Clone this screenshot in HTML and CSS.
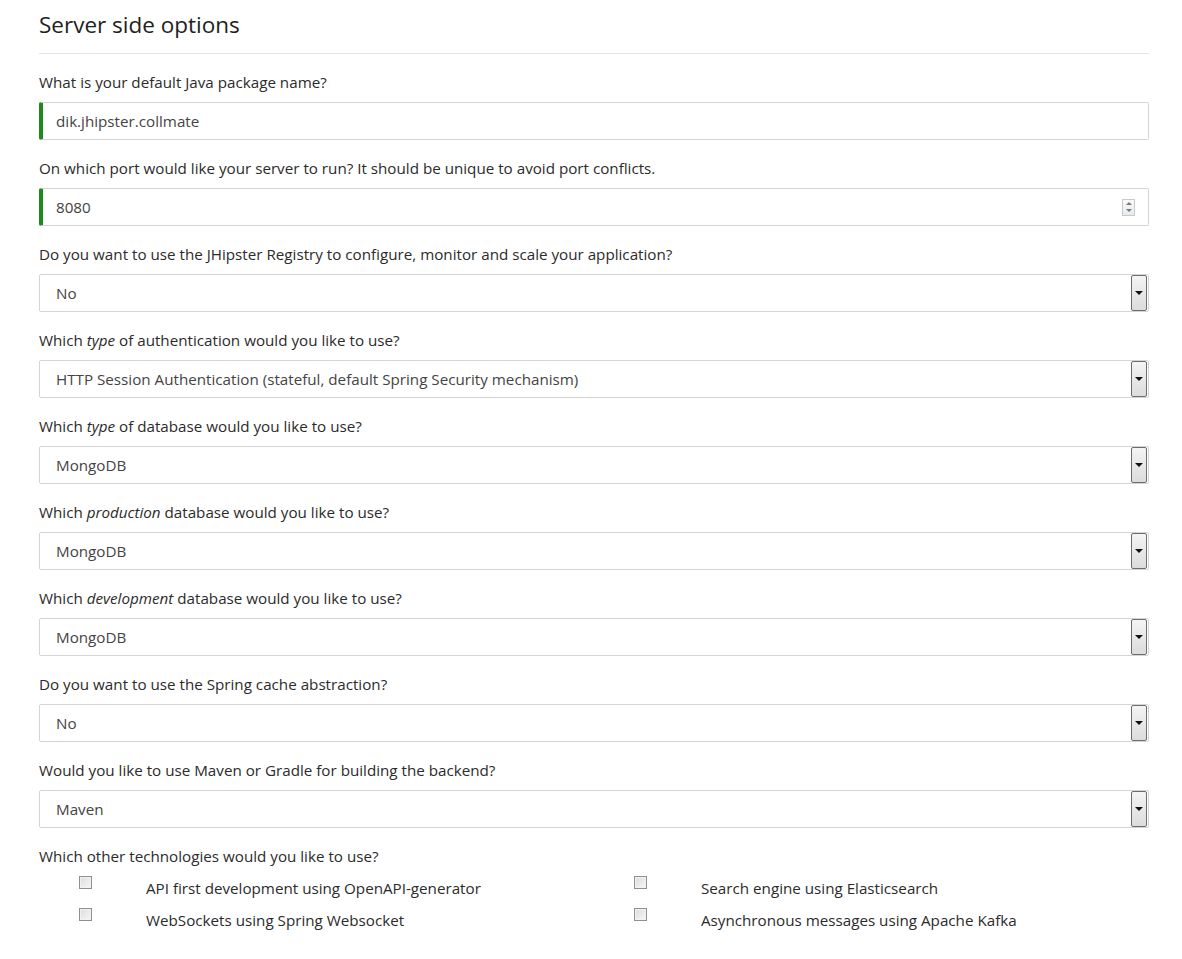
FILE: index.html
```html
<!DOCTYPE html>
<html>
<head>
<meta charset="utf-8">
<link rel="stylesheet" href="styles.css">
</head>
<body>
<div class="page">
  <h2 class="title">Server side options</h2>
  <hr class="rule">

  <div class="field">
    <div class="label">What is your default Java package name?</div>
    <div class="box valid"><span class="value">dik.jhipster.collmate</span></div>
  </div>

  <div class="field">
    <div class="label">On which port would like your server to run? It should be unique to avoid port conflicts.</div>
    <div class="box valid"><span class="value">8080</span>
      <span class="spin"><span class="spin-up"></span><span class="spin-down"></span></span>
    </div>
  </div>

  <div class="field">
    <div class="label">Do you want to use the JHipster Registry to configure, monitor and scale your application?</div>
    <div class="box select"><span class="value">No</span><span class="arrow"></span></div>
  </div>

  <div class="field">
    <div class="label">Which <em>type</em> of authentication would you like to use?</div>
    <div class="box select"><span class="value">HTTP Session Authentication (stateful, default Spring Security mechanism)</span><span class="arrow"></span></div>
  </div>

  <div class="field">
    <div class="label">Which <em>type</em> of database would you like to use?</div>
    <div class="box select"><span class="value">MongoDB</span><span class="arrow"></span></div>
  </div>

  <div class="field">
    <div class="label">Which <em>production</em> database would you like to use?</div>
    <div class="box select"><span class="value">MongoDB</span><span class="arrow"></span></div>
  </div>

  <div class="field">
    <div class="label">Which <em>development</em> database would you like to use?</div>
    <div class="box select"><span class="value">MongoDB</span><span class="arrow"></span></div>
  </div>

  <div class="field">
    <div class="label">Do you want to use the Spring cache abstraction?</div>
    <div class="box select"><span class="value">No</span><span class="arrow"></span></div>
  </div>

  <div class="field">
    <div class="label">Would you like to use Maven or Gradle for building the backend?</div>
    <div class="box select"><span class="value">Maven</span><span class="arrow"></span></div>
  </div>

  <div class="field">
    <div class="label">Which other technologies would you like to use?</div>
    <div class="checks">
      <div class="check"><span class="cb"></span><span class="cb-label">API first development using OpenAPI-generator</span></div>
      <div class="check"><span class="cb"></span><span class="cb-label">Search engine using Elasticsearch</span></div>
      <div class="check"><span class="cb"></span><span class="cb-label">WebSockets using Spring Websocket</span></div>
      <div class="check"><span class="cb"></span><span class="cb-label">Asynchronous messages using Apache Kafka</span></div>
    </div>
  </div>
</div>
</body>
</html>
```
FILE: styles.css
```css
html, body {
  margin: 0;
  padding: 0;
  background: #fff;
}
body {
  font-family: "Open Sans", "Noto Sans", "Liberation Sans", sans-serif;
  color: #333;
  font-size: 15.2px;
}
.page {
  width: 1110px;
  padding: 10px 0 0 39px;
}
.title {
  margin: 0;
  font-size: 22.5px;
  font-weight: 400;
  line-height: 29px;
  color: #222;
}
.rule {
  margin: 14px 0 16px 0;
  border: 0;
  border-top: 1px solid #e5e5e5;
  height: 0;
}
.field {
  margin-bottom: 16px;
}
.label {
  height: 24px;
  line-height: 24px;
  margin-bottom: 8px;
  color: #2b2b2b;
}
.label em {
  font-style: italic;
}
.box {
  box-sizing: border-box;
  height: 38px;
  border: 1px solid #d4d4d4;
  border-radius: 2px;
  display: flex;
  align-items: center;
  padding-left: 16px;
  color: #444;
}
.box.valid {
  border-left: 4px solid #1e8a1e;
  padding-left: 13px;
}
.value {
  flex: 1;
}
.spin {
  width: 13px;
  height: 17px;
  margin-right: 13px;
  border: 1px solid #c9c9c9;
  box-sizing: border-box;
  display: flex;
  flex-direction: column;
  align-items: center;
  justify-content: space-around;
  background: linear-gradient(#fafafa, #e9e9e9);
}
.spin-up {
  width: 0;
  height: 0;
  border-left: 3px solid transparent;
  border-right: 3px solid transparent;
  border-bottom: 3px solid #6b7c8c;
}
.spin-down {
  width: 0;
  height: 0;
  border-left: 3px solid transparent;
  border-right: 3px solid transparent;
  border-top: 3px solid #6b7c8c;
}
.box.select {
  padding-right: 1px;
}
.arrow {
  box-sizing: border-box;
  width: 16px;
  height: 36px;
  border: 1px solid #6d6d6d;
  border-radius: 2px;
  background: linear-gradient(#f4f4f4, #dcdcdc);
  display: flex;
  align-items: center;
  justify-content: center;
}
.arrow::after {
  content: "";
  width: 0;
  height: 0;
  border-left: 4px solid transparent;
  border-right: 4px solid transparent;
  border-top: 4px solid #111;
}
.checks {
  display: grid;
  grid-template-columns: 555px 555px;
  grid-auto-rows: 32px;
  margin-top: -4px;
}
.check {
  display: flex;
  align-items: center;
  padding-left: 40px;
}
.cb {
  box-sizing: border-box;
  width: 13px;
  height: 13px;
  border: 1px solid #8f8f8f;
  background: linear-gradient(135deg, #dcdcdc, #f7f7f7);
  box-shadow: inset 0 0 0 1px #f2f2f2;
  margin-top: -12px;
  margin-right: 54px;
}
.cb-label {
  color: #2b2b2b;
}
```
